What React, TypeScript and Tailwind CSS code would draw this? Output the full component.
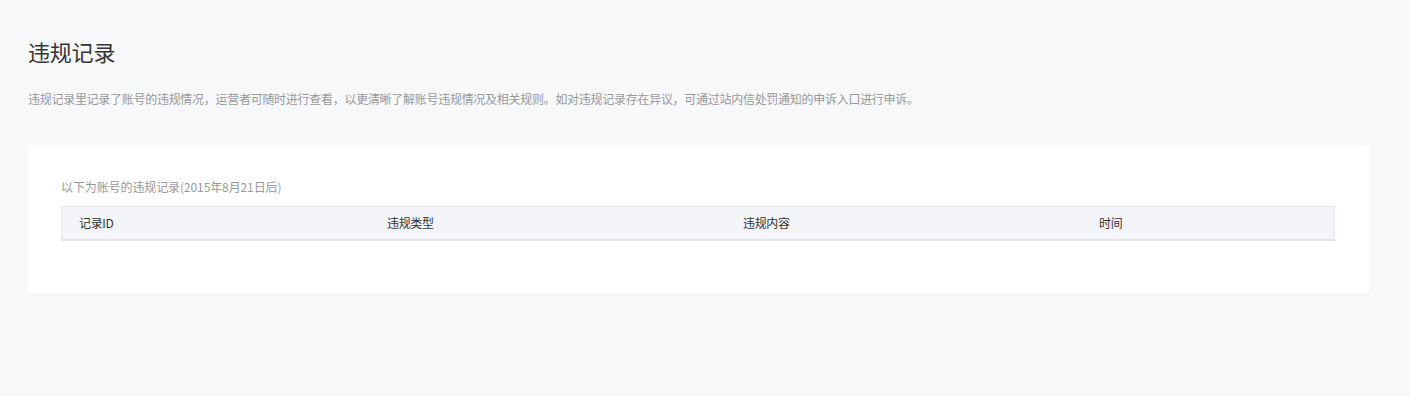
export default function App() {
  const cols = [
    { label: "记录ID", w: "w-[308px]" },
    { label: "违规类型", w: "w-[356px]" },
    { label: "违规内容", w: "w-[356px]" },
    { label: "时间", w: "flex-1" },
  ];

  return (
    <div className="min-h-[396px] w-full bg-[#f7f8fa] px-[28px] pt-[36px] font-['Noto_Sans_CJK_SC','Noto_Sans',sans-serif]">
      <h1 className="text-[22px] leading-[30px] text-[#353535] tracking-[-0.2px]">违规记录</h1>
      <p className="mt-[23px] text-[12px] leading-[20px] text-[#999] tracking-[-0.28px]">
        违规记录里记录了账号的违规情况，运营者可随时进行查看，以更清晰了解账号违规情况及相关规则。如对违规记录存在异议，可通过站内信处罚通知的申诉入口进行申诉。
      </p>

      <div className="mt-[36px] w-[1341px] rounded-[2px] bg-white px-[33px] pt-[32px] pb-[52px]">
        <div className="text-[12px] leading-[20px] text-[#999] tracking-[-0.1px]">
          以下为账号的违规记录(2015年8月21日后)
        </div>
        <div className="mt-[9px] flex h-[35px] w-[1274px] items-center border border-[#e6e8ee] border-b-2 border-b-[#e1e3e8] bg-[#f4f5f9] pl-[17px]">
          {cols.map((c) => (
            <div key={c.label} className={`${c.w} text-[12px] text-[#333] tracking-[-0.35px]`}>
              {c.label}
            </div>
          ))}
        </div>
      </div>
    </div>
  );
}
